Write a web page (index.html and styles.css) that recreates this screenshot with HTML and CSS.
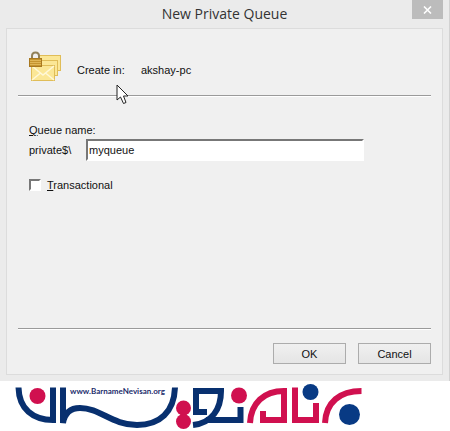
FILE: index.html
```html
<!DOCTYPE html>
<html lang="en">
<head>
    <meta charset="UTF-8">
    <meta name="viewport" content="width=device-width, initial-scale=1.0">
    <title>New Private Queue</title>
    <link rel="stylesheet" href="styles.css">
</head>
<body>
    <form class="dialog">
        <div class="title-bar">
            <h1 class="title">New Private Queue</h1>
            <button type="button" class="close-btn" aria-label="Close">
                <svg width="9" height="8" viewBox="0 0 9 8">
                    <path d="M1 0.5 L8 7.5 M8 0.5 L1 7.5" stroke="#fff" stroke-width="1.6" fill="none"/>
                </svg>
            </button>
        </div>

        <div class="panel">
            <div class="header">
                <svg class="queue-icon" width="34" height="32" viewBox="0 0 34 32">
                    <g fill="#fbe796" stroke="#e0bd58">
                        <rect x="10.5" y="4.5" width="21" height="15"/>
                        <rect x="7.5" y="9.5" width="21" height="15"/>
                        <rect x="2.5" y="14.5" width="23" height="15"/>
                    </g>
                    <path d="M3 15 L14 24 L25 15 M3 29 L11.5 22 M25 29 L16.5 22" fill="none" stroke="#fff8d8" stroke-width="1.5"/>
                    <path d="M3 9 V5 Q3 1.5 6.5 1.5 Q10 1.5 10 5 V9" fill="none" stroke="#91815a" stroke-width="2"/>
                    <rect x="0.5" y="7.5" width="12" height="8" fill="#c4942f" stroke="#a87820"/>
                    <path d="M1 9.5 H12 M1 11.5 H12 M1 13.5 H12" stroke="#dfb656"/>
                </svg>
                <span class="create-label">Create in:</span>
                <span>akshay-pc</span>
                <svg class="cursor" width="14" height="21" viewBox="0 0 14 21">
                    <path d="M1 1 V16 L4.5 13 L7.5 19.5 L10 18.5 L7.5 12 H12 Z" fill="#fff" stroke="#222"/>
                </svg>
            </div>
            <hr class="line">
            <div class="fields">
                <label for="queueName"><u>Q</u>ueue name:</label>
                <div class="name-row">
                    <span class="prefix">private$\</span>
                    <input type="text" id="queueName" class="name-input" value="myqueue">
                </div>
                <label class="check-row">
                    <input type="checkbox" class="check">
                    <span><u>T</u>ransactional</span>
                </label>
            </div>
            <hr class="line">
            <div class="buttons">
                <button type="submit" class="btn">OK</button>
                <button type="button" class="btn">Cancel</button>
            </div>
        </div>
    </form>

    <footer class="footer">
        <svg class="logo" width="350" height="50" viewBox="15 381 350 50">
            <g fill="none" stroke="#08306f" stroke-width="6">
                <path d="M18.5 387.5 C19 409 33 420 53 420 V387.5"/>
                <path d="M63 387.5 V423 C65 411 72 408 80 408 C100 408 112 425 137 425 C160 425 174 412 175 387.5"/>
                <path d="M207 412 H196 V391 H221 C221 409 212 423 193 425 M206 420 H240.5 V407"/>
            </g>
            <g fill="none" stroke="#d0104f" stroke-width="6">
                <path d="M250 423 C251 403 264 391 284 391 V420 H263 V411"/>
                <path d="M295 387.5 V420 H316 V403"/>
                <path d="M325 423 C326 402 340 391 361.5 391"/>
            </g>
            <g fill="#d0104f">
                <circle cx="37.5" cy="396" r="8"/>
                <circle cx="183.5" cy="408" r="7.5"/>
                <circle cx="183.5" cy="421.5" r="7.5"/>
                <circle cx="239" cy="395.5" r="8"/>
            </g>
            <g fill="#083a84">
                <circle cx="310.5" cy="392" r="8"/>
                <circle cx="349.5" cy="414.5" r="10.5"/>
            </g>
            <text class="site" x="70" y="394">www.BarnameNevisan.org</text>
        </svg>
    </footer>
</body>
</html>
```
FILE: styles.css
```css
* {
    box-sizing: border-box;
}

body {
    margin: 0;
    background-color: #fff;
    color: #111;
    font-family: "Liberation Sans", Arial, sans-serif;
    font-size: 11px;
    line-height: 16px;
    overflow: hidden;
}

.dialog {
    padding: 0 6px 6px;
    background-color: #ebebeb;
    border-right: 1px solid #d2d2d2;
}

.title-bar {
    position: relative;
    height: 28px;
}

.title {
    margin: 0;
    font: 14px/28px "Open Sans", "Noto Sans", sans-serif;
    color: #333;
    text-align: center;
}

.close-btn {
    position: absolute;
    top: 0;
    right: 0;
    display: flex;
    align-items: center;
    justify-content: center;
    width: 31px;
    height: 19px;
    padding: 0;
    border: none;
    background-color: #bcbcbc;
}

.panel {
    padding: 20px 11px 10px;
    background-color: #f0f0f0;
    border: 1px solid #dcdcdc;
}

.header {
    position: relative;
    display: flex;
    align-items: flex-start;
    height: 46px;
    padding: 2px 0 0 11px;
    line-height: 38px;
}

.create-label {
    width: 64px;
    margin-left: 14px;
}

/* Mouse pointer over the header */
.cursor {
    position: absolute;
    left: 98px;
    top: 35px;
}

.line {
    height: 2px;
    margin: 0;
    border: none;
    border-top: 1px solid #9a9a9a;
    background-color: #fff;
}

.fields {
    height: 231px;
    padding: 25px 67px 0 11px;
}

.name-row {
    display: flex;
    align-items: center;
    margin: 1px 0 16px;
}

.prefix {
    width: 57px;
}

.name-input {
    flex: 1;
    min-width: 0;
    height: 22px;
    padding: 0 1px;
    border: 2px solid;
    border-color: #777 #fff #fff #777;
    background-color: #fff;
    color: #111;
    font: inherit;
}

.check-row {
    display: flex;
    align-items: center;
    gap: 6px;
}

.check {
    appearance: none;
    width: 12px;
    height: 12px;
    margin: 0;
    border: 2px solid;
    border-color: #777 #fff #fff #777;
    background-color: #fff;
}

.buttons {
    display: flex;
    justify-content: flex-end;
    gap: 12px;
    padding-top: 13px;
}

.btn {
    width: 73px;
    height: 21px;
    padding: 0;
    border: 1px solid #acacac;
    background: linear-gradient(#f0f0f0, #e5e5e5);
    color: #111;
    font: inherit;
}

.footer {
    padding-left: 15px;
}

.logo {
    display: block;
}

.site {
    font: bold 8px Lato, sans-serif;
    fill: #1c2c6c;
}
```
